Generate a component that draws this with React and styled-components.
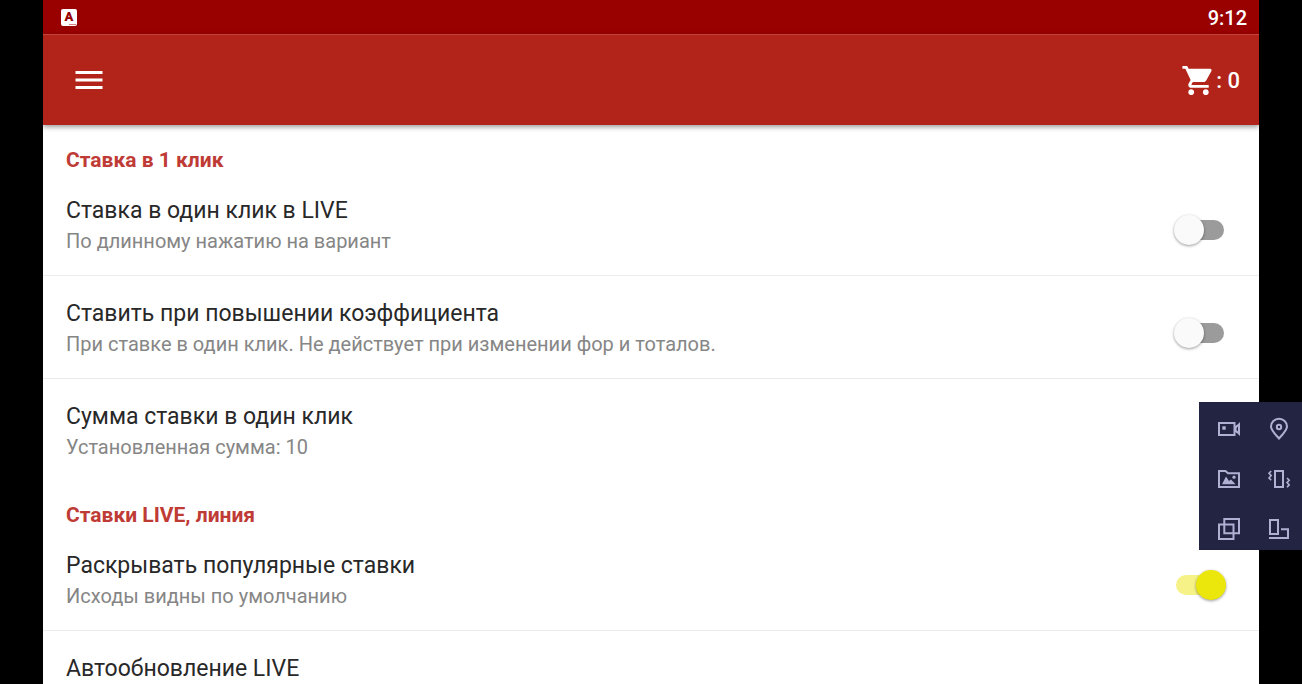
import React, { useState } from "react"
import styled, { createGlobalStyle, css, ThemeProvider } from "styled-components"
import { MdMenu, MdShoppingCart } from "react-icons/md"

const theme = {
  statusBar: "#990000",
  appBar: "#b22419",
  appBarEdge: "#c4453c",
  accent: "#bf3b35",
  text: "#282828",
  textLight: "#868686",
  divider: "#ececec",
  switchOff: "#9b9b9b",
  switchOn: "#ebe60c",
  switchOnTrack: "#f6f287",
  tools: "#232442",
  toolsIcon: "#b0b0d3",
}

const GlobalStyle = createGlobalStyle`
  * {
    box-sizing: border-box;
  }

  html {
    overflow: hidden;
  }

  body {
    margin: 0;
    background: #000;
    font-family: Roboto, "Noto Sans", sans-serif;
  }
`

const Frame = styled.div`
  height: 100vh;
  padding: 0 43px;
  overflow: hidden;
`

const Screen = styled.main`
  min-height: 100%;
  background: #fff;
`

const StatusBar = styled.div`
  display: flex;
  align-items: center;
  justify-content: space-between;
  height: 34px;
  padding: 1px 12px 0 18px;
  background: ${props => props.theme.statusBar};
  color: #fff;
  font-size: 20px;
  font-weight: 500;
`

const Badge = styled.span`
  display: flex;
  flex-direction: column;
  align-items: center;
  width: 16px;
  height: 17px;
  border-radius: 2px;
  background: #fff;
  color: ${props => props.theme.statusBar};
  font-size: 13px;
  font-weight: 900;
  line-height: 15px;

  &::after {
    content: "";
    align-self: flex-end;
    width: 7px;
    height: 1px;
    margin-right: 1px;
    background: #d98080;
  }
`

const AppBar = styled.header`
  display: flex;
  align-items: center;
  justify-content: space-between;
  height: 91px;
  padding: 0 19px 0 28px;
  border-top: 1px solid ${props => props.theme.appBarEdge};
  background: ${props => props.theme.appBar};
  box-shadow: 0 2px 5px rgba(0, 0, 0, 0.4);
`

const BarButton = styled.button`
  display: flex;
  align-items: center;
  padding: 0;
  border: 0;
  background: none;
  color: #fff;
  font: 500 22px Roboto, sans-serif;
  cursor: pointer;
`

const Settings = styled.div`
  padding-top: 1px;
`

const SectionTitle = styled.h2`
  margin: 0;
  padding: 22px 23px 0;
  color: ${props => props.theme.accent};
  font-size: 21px;
  font-weight: 700;
  line-height: 25px;
`

const Row = styled.div`
  display: flex;
  align-items: center;
  justify-content: space-between;
  padding: 23px 35px 19px 23px;

  ${props => props.divided && css`
    border-bottom: 1px solid ${props.theme.divider};
  `}
`

const RowTitle = styled.label`
  display: block;
  color: ${props => props.theme.text};
  font-size: 23px;
  line-height: 30px;
`

const RowNote = styled.p`
  margin: 0;
  color: ${props => props.theme.textLight};
  font-size: 20px;
  line-height: 30px;
`

const Switch = styled.input`
  appearance: none;
  display: flex;
  align-items: center;
  flex-shrink: 0;
  width: 48px;
  height: 20px;
  margin: 8px 0 0;
  border-radius: 10px;
  background: ${props => props.theme.switchOff};
  cursor: pointer;

  &::before {
    content: "";
    flex-shrink: 0;
    width: 30px;
    height: 30px;
    margin-left: -2px;
    border-radius: 50%;
    background: #fafafa;
    box-shadow: 0 1px 3px rgba(0, 0, 0, 0.4);
  }

  &:checked {
    background: ${props => props.theme.switchOnTrack};
  }

  &:checked::before {
    margin-left: 20px;
    background: ${props => props.theme.switchOn};
  }
`

const Tools = styled.aside`
  position: fixed;
  top: 402px;
  right: 0;
  display: grid;
  grid-template-columns: 24px 24px;
  gap: 26px;
  padding: 15px 11px 9px 18px;
  background: ${props => props.theme.tools};
`

const ToolButton = styled.button`
  display: block;
  width: 24px;
  height: 24px;
  padding: 0;
  border: 0;
  background: none;
  color: ${props => props.theme.toolsIcon};
  cursor: pointer;

  svg {
    display: block;
  }
`

const sections = [
  {
    title: "Ставка в 1 клик",
    rows: [
      { id: "oneClick", title: "Ставка в один клик в LIVE", note: "По длинному нажатию на вариант", toggle: true },
      { id: "raise", title: "Ставить при повышении коэффициента", note: "При ставке в один клик. Не действует при изменении фор и тоталов.", toggle: true },
      { id: "sum", title: "Сумма ставки в один клик", note: "Установленная сумма: 10" },
    ],
  },
  {
    title: "Ставки LIVE, линия",
    rows: [
      { id: "popular", title: "Раскрывать популярные ставки", note: "Исходы видны по умолчанию", toggle: true },
      { id: "autoUpdate", title: "Автообновление LIVE" },
    ],
  },
]

const tools = [
  {
    name: "Камера",
    icon: (
      <>
        <path d="M2 6H17.5V18H2Z" />
        <path d="M23 5V19L20.5 16.5L18 15V9L20.5 7.5ZM21 9.5L19.6 11V13L21 14.5Z" fill="currentColor" fillRule="evenodd" stroke="none" />
        <path d="M5.3 9.3H8.7V12.7H5.3Z" fill="currentColor" stroke="none" />
      </>
    ),
  },
  {
    name: "Местоположение",
    icon: (
      <>
        <path d="M12 21.5C8.5 17.5 4 13.5 4 9.6A8 7.8 0 0 1 20 9.6C20 13.5 15.5 17.5 12 21.5Z" />
        <circle cx="12" cy="10" r="2.2" />
      </>
    ),
  },
  {
    name: "Галерея",
    icon: (
      <>
        <path d="M2 4H8.5L11 6.2H22V20H2Z" />
        <path d="M5 17.2L9 9.5L12 14L14 12.5L18.5 17.2Z" fill="currentColor" stroke="none" />
        <circle cx="17" cy="10.2" r="1.6" fill="currentColor" stroke="none" />
      </>
    ),
  },
  {
    name: "Вибрация",
    icon: (
      <>
        <path d="M8 4H16V20H8Z" />
        <path d="M4.2 4L2 6.3L4.2 8.6L2 10.9L4.2 13.2M20 11L22.2 13.3L20 15.6L22.2 17.9L20 20.2" strokeWidth="1.6" />
      </>
    ),
  },
  {
    name: "Окна",
    icon: <path d="M7.3 2H22V16.2H7.3ZM2 7.5H16.5V22H2Z" />,
  },
  {
    name: "Поворот экрана",
    icon: <path d="M3 3H11V17H3ZM14 12.3H21V21H2" />,
  },
]

const App = () => {
  const [values, setValues] = useState({ oneClick: false, raise: false, popular: true })

  const toggle = id => setValues({ ...values, [id]: !values[id] })

  return (
    <ThemeProvider theme={theme}>
      <GlobalStyle />
      <Frame>
        <Screen>
          <StatusBar>
            <Badge>A</Badge>
            <span>9:12</span>
          </StatusBar>
          <AppBar>
            <BarButton aria-label="Меню"><MdMenu size={36} /></BarButton>
            <BarButton aria-label="Корзина"><MdShoppingCart size={35} />: 0</BarButton>
          </AppBar>
          <Settings>
            {sections.map(section => (
              <section key={section.title}>
                <SectionTitle>{section.title}</SectionTitle>
                {section.rows.map((row, i) => (
                  <Row key={row.id} divided={i < section.rows.length - 1 ? 1 : 0}>
                    <div>
                      <RowTitle
                        as={row.toggle ? "label" : "div"}
                        htmlFor={row.toggle ? row.id : undefined}
                      >
                        {row.title}
                      </RowTitle>
                      {row.note && <RowNote>{row.note}</RowNote>}
                    </div>
                    {row.toggle && (
                      <Switch
                        type="checkbox"
                        role="switch"
                        id={row.id}
                        checked={values[row.id]}
                        onChange={() => toggle(row.id)}
                      />
                    )}
                  </Row>
                ))}
              </section>
            ))}
          </Settings>
        </Screen>
      </Frame>
      <Tools>
        {tools.map(tool => (
          <ToolButton key={tool.name} aria-label={tool.name}>
            <svg width="24" height="24" viewBox="0 0 24 24" fill="none" stroke="currentColor" strokeWidth="2">
              {tool.icon}
            </svg>
          </ToolButton>
        ))}
      </Tools>
    </ThemeProvider>
  )
}

export default App
